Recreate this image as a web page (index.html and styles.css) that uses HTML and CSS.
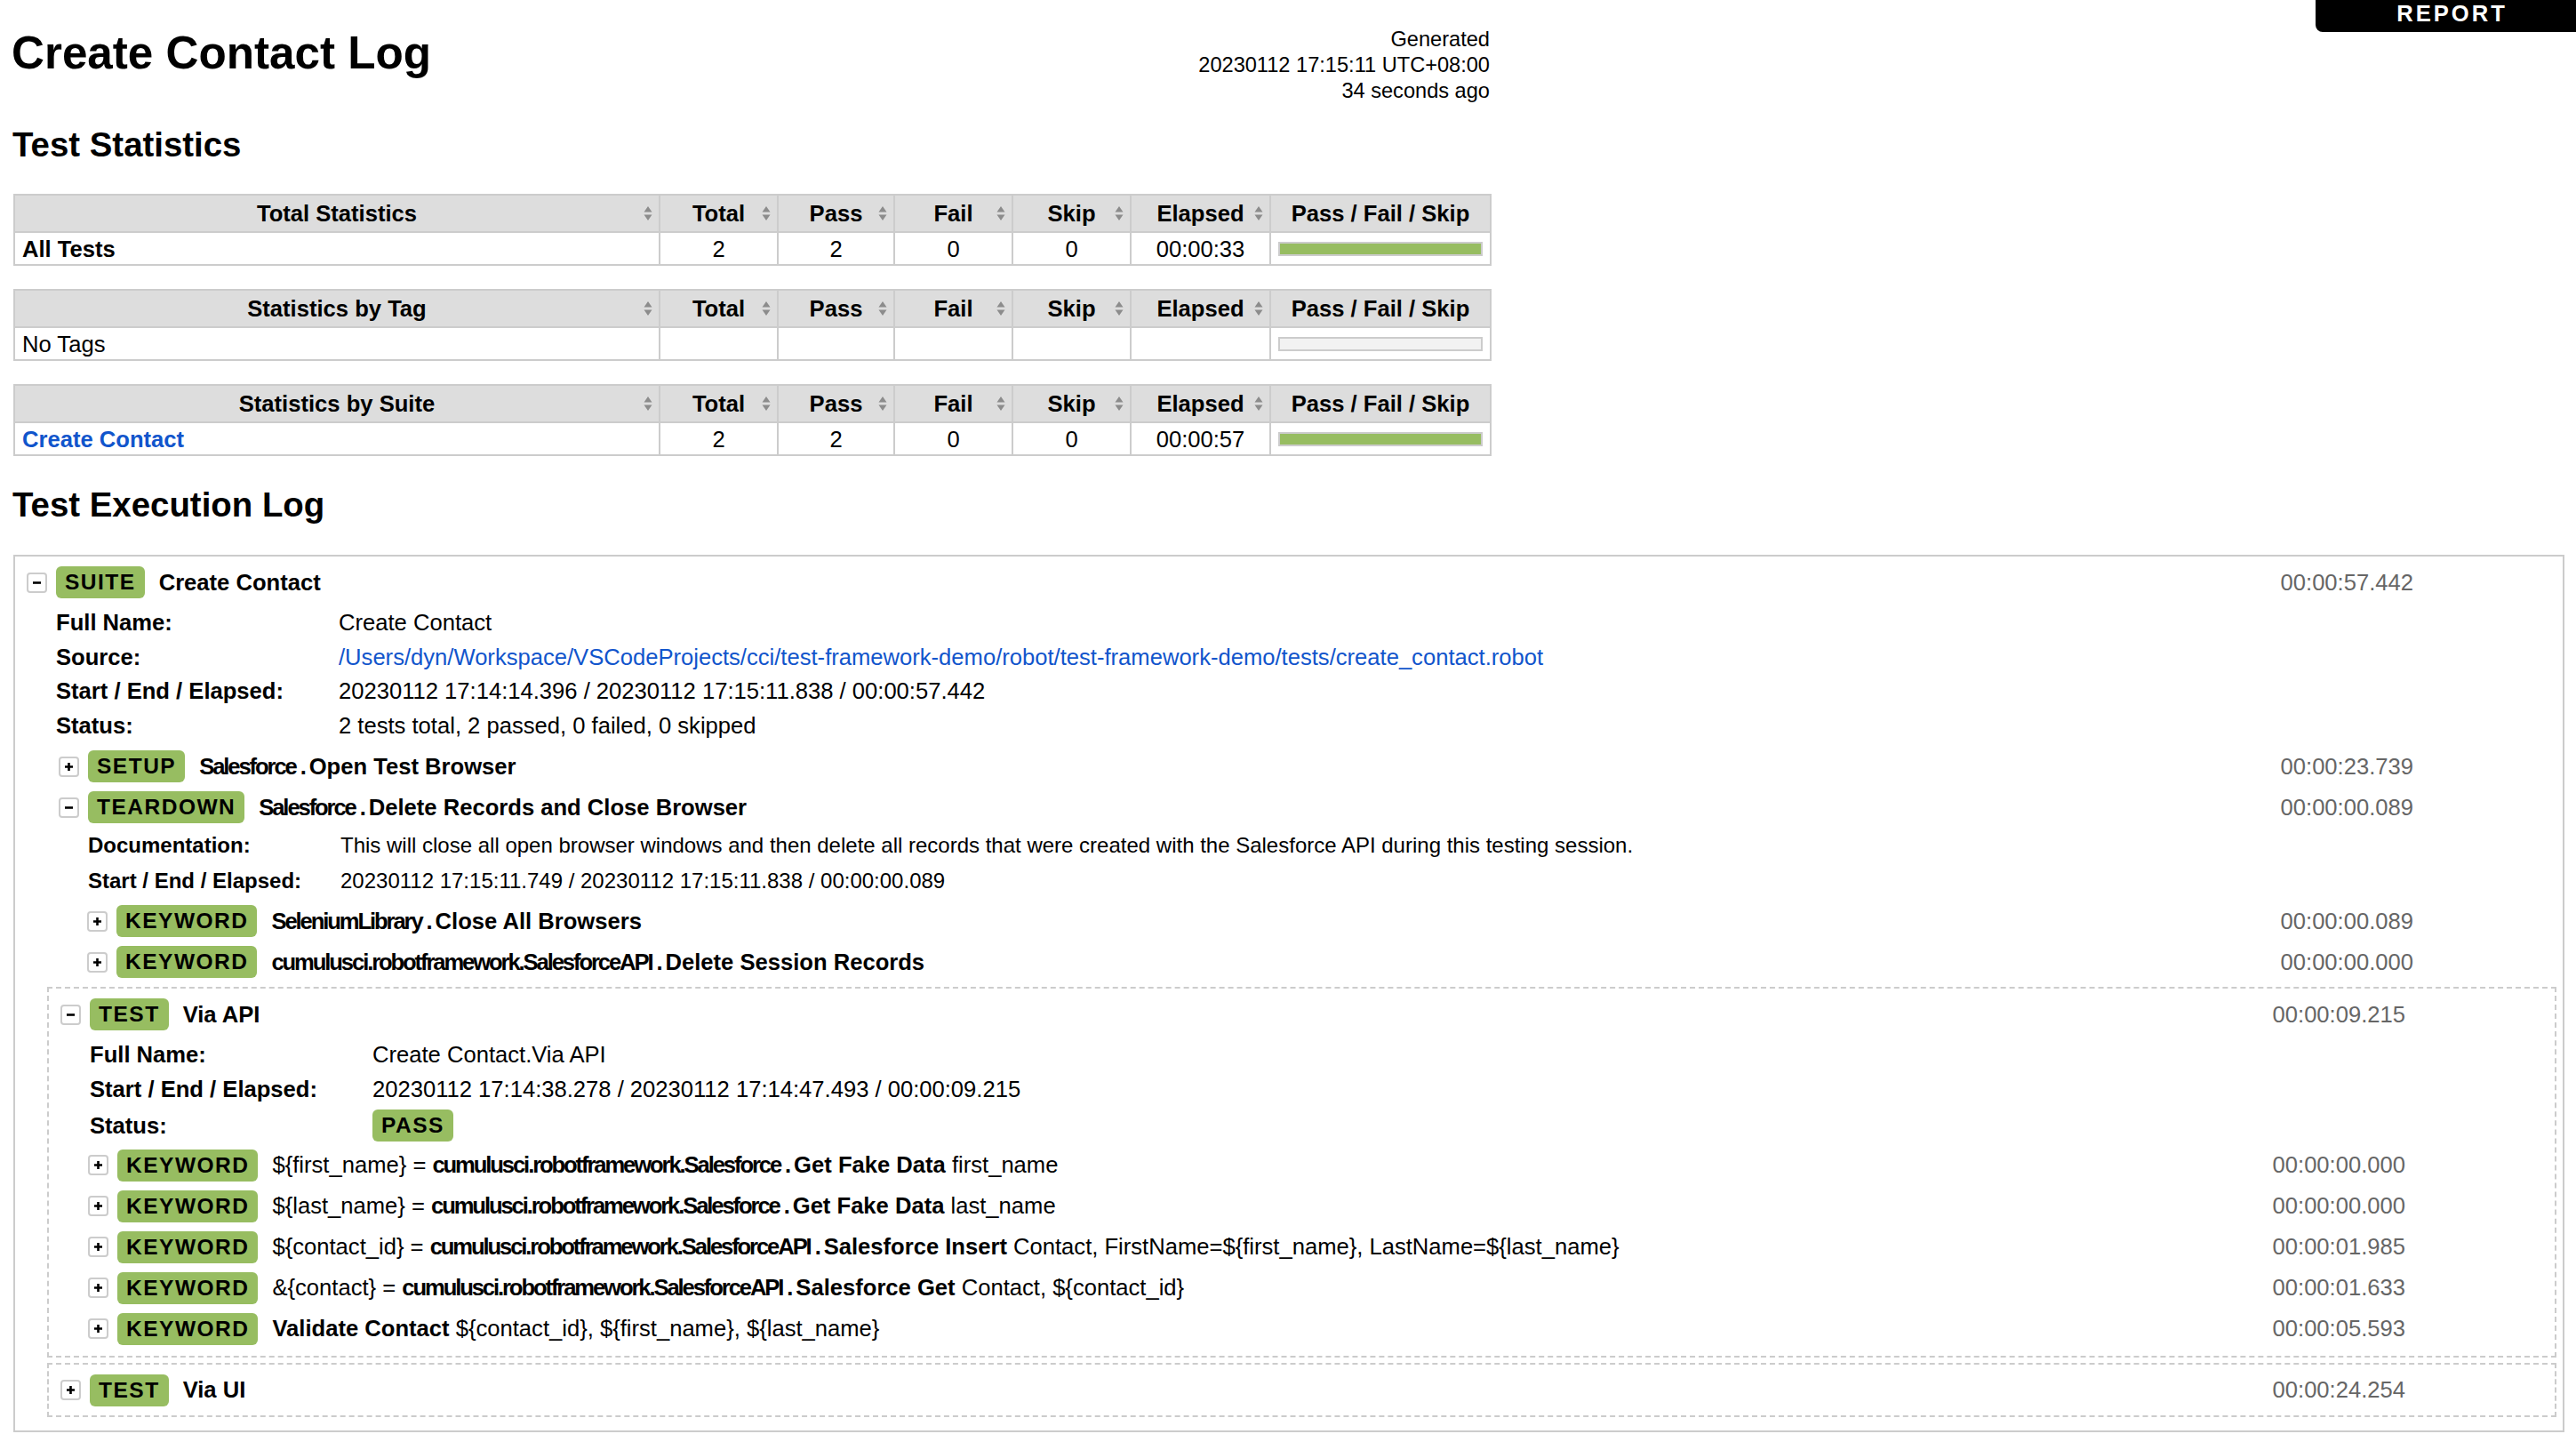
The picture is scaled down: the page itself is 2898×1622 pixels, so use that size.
FILE: index.html
```html
<!DOCTYPE html>
<html lang="en">
<head>
<meta charset="utf-8">
<title>Create Contact Log</title>
<link rel="stylesheet" href="styles.css">
</head>
<body>
<div class="report-tab"><a href="#">REPORT</a></div>

<div class="header">
  <h1 class="title">Create Contact Log</h1>
  <div class="generated">Generated<br>20230112 17:15:11 UTC+08:00<br>34 seconds ago</div>
</div>

<h2 class="section-title">Test Statistics</h2>

<table class="statistics">
  <colgroup><col class="c-name"><col class="c-num"><col class="c-num2"><col class="c-num"><col class="c-num"><col class="c-elapsed"><col class="c-graph"></colgroup>
  <tr>
    <th>Total Statistics<svg class="sort" width="10" height="18" viewBox="0 0 10 18"><path d="M5 1L9.5 7.5H0.5Z M5 17L9.5 10.5H0.5Z"/></svg></th>
    <th>Total<svg class="sort" width="10" height="18" viewBox="0 0 10 18"><path d="M5 1L9.5 7.5H0.5Z M5 17L9.5 10.5H0.5Z"/></svg></th>
    <th>Pass<svg class="sort" width="10" height="18" viewBox="0 0 10 18"><path d="M5 1L9.5 7.5H0.5Z M5 17L9.5 10.5H0.5Z"/></svg></th>
    <th>Fail<svg class="sort" width="10" height="18" viewBox="0 0 10 18"><path d="M5 1L9.5 7.5H0.5Z M5 17L9.5 10.5H0.5Z"/></svg></th>
    <th>Skip<svg class="sort" width="10" height="18" viewBox="0 0 10 18"><path d="M5 1L9.5 7.5H0.5Z M5 17L9.5 10.5H0.5Z"/></svg></th>
    <th>Elapsed<svg class="sort" width="10" height="18" viewBox="0 0 10 18"><path d="M5 1L9.5 7.5H0.5Z M5 17L9.5 10.5H0.5Z"/></svg></th>
    <th>Pass / Fail / Skip</th>
  </tr>
  <tr>
    <td class="stat-name bold">All Tests</td>
    <td>2</td><td>2</td><td>0</td><td>0</td><td>00:00:33</td>
    <td><div class="graph"><div class="pass-bar"></div></div></td>
  </tr>
</table>

<table class="statistics">
  <colgroup><col class="c-name"><col class="c-num"><col class="c-num2"><col class="c-num"><col class="c-num"><col class="c-elapsed"><col class="c-graph"></colgroup>
  <tr>
    <th>Statistics by Tag<svg class="sort" width="10" height="18" viewBox="0 0 10 18"><path d="M5 1L9.5 7.5H0.5Z M5 17L9.5 10.5H0.5Z"/></svg></th>
    <th>Total<svg class="sort" width="10" height="18" viewBox="0 0 10 18"><path d="M5 1L9.5 7.5H0.5Z M5 17L9.5 10.5H0.5Z"/></svg></th>
    <th>Pass<svg class="sort" width="10" height="18" viewBox="0 0 10 18"><path d="M5 1L9.5 7.5H0.5Z M5 17L9.5 10.5H0.5Z"/></svg></th>
    <th>Fail<svg class="sort" width="10" height="18" viewBox="0 0 10 18"><path d="M5 1L9.5 7.5H0.5Z M5 17L9.5 10.5H0.5Z"/></svg></th>
    <th>Skip<svg class="sort" width="10" height="18" viewBox="0 0 10 18"><path d="M5 1L9.5 7.5H0.5Z M5 17L9.5 10.5H0.5Z"/></svg></th>
    <th>Elapsed<svg class="sort" width="10" height="18" viewBox="0 0 10 18"><path d="M5 1L9.5 7.5H0.5Z M5 17L9.5 10.5H0.5Z"/></svg></th>
    <th>Pass / Fail / Skip</th>
  </tr>
  <tr>
    <td class="stat-name">No Tags</td>
    <td></td><td></td><td></td><td></td><td></td>
    <td><div class="graph"></div></td>
  </tr>
</table>

<table class="statistics">
  <colgroup><col class="c-name"><col class="c-num"><col class="c-num2"><col class="c-num"><col class="c-num"><col class="c-elapsed"><col class="c-graph"></colgroup>
  <tr>
    <th>Statistics by Suite<svg class="sort" width="10" height="18" viewBox="0 0 10 18"><path d="M5 1L9.5 7.5H0.5Z M5 17L9.5 10.5H0.5Z"/></svg></th>
    <th>Total<svg class="sort" width="10" height="18" viewBox="0 0 10 18"><path d="M5 1L9.5 7.5H0.5Z M5 17L9.5 10.5H0.5Z"/></svg></th>
    <th>Pass<svg class="sort" width="10" height="18" viewBox="0 0 10 18"><path d="M5 1L9.5 7.5H0.5Z M5 17L9.5 10.5H0.5Z"/></svg></th>
    <th>Fail<svg class="sort" width="10" height="18" viewBox="0 0 10 18"><path d="M5 1L9.5 7.5H0.5Z M5 17L9.5 10.5H0.5Z"/></svg></th>
    <th>Skip<svg class="sort" width="10" height="18" viewBox="0 0 10 18"><path d="M5 1L9.5 7.5H0.5Z M5 17L9.5 10.5H0.5Z"/></svg></th>
    <th>Elapsed<svg class="sort" width="10" height="18" viewBox="0 0 10 18"><path d="M5 1L9.5 7.5H0.5Z M5 17L9.5 10.5H0.5Z"/></svg></th>
    <th>Pass / Fail / Skip</th>
  </tr>
  <tr>
    <td class="stat-name bold"><a href="#">Create Contact</a></td>
    <td>2</td><td>2</td><td>0</td><td>0</td><td>00:00:57</td>
    <td><div class="graph"><div class="pass-bar"></div></div></td>
  </tr>
</table>

<h2 class="section-title log-title">Test Execution Log</h2>

<div class="suite-box">
  <div class="el-header">
    <span class="toggle"><svg width="11" height="11" viewBox="0 0 11 11"><path d="M1 5.5H10" stroke="#000" stroke-width="2.6"/></svg></span>
    <span class="label">SUITE</span>
    <span class="name">Create Contact</span>
    <span class="elapsed">00:00:57.442</span>
  </div>
  <table class="metadata">
    <tr><th>Full Name:</th><td>Create Contact</td></tr>
    <tr><th>Source:</th><td><a href="#">/Users/dyn/Workspace/VSCodeProjects/cci/test-framework-demo/robot/test-framework-demo/tests/create_contact.robot</a></td></tr>
    <tr><th>Start / End / Elapsed:</th><td>20230112 17:14:14.396 / 20230112 17:15:11.838 / 00:00:57.442</td></tr>
    <tr><th>Status:</th><td>2 tests total, 2 passed, 0 failed, 0 skipped</td></tr>
  </table>

  <div class="suite-children">
    <div class="kw">
      <div class="el-header">
        <span class="toggle"><svg width="11" height="11" viewBox="0 0 11 11"><path d="M5.5 1V10M1 5.5H10" stroke="#000" stroke-width="2.6"/></svg></span>
        <span class="label">SETUP</span>
        <span class="name"><span class="parent">Salesforce . </span>Open Test Browser</span>
        <span class="elapsed">00:00:23.739</span>
      </div>
    </div>

    <div class="kw">
      <div class="el-header">
        <span class="toggle"><svg width="11" height="11" viewBox="0 0 11 11"><path d="M1 5.5H10" stroke="#000" stroke-width="2.6"/></svg></span>
        <span class="label">TEARDOWN</span>
        <span class="name"><span class="parent">Salesforce . </span>Delete Records and Close Browser</span>
        <span class="elapsed">00:00:00.089</span>
      </div>
      <table class="metadata small">
        <tr><th>Documentation:</th><td>This will close all open browser windows and then delete all records that were created with the Salesforce API during this testing session.</td></tr>
        <tr><th>Start / End / Elapsed:</th><td>20230112 17:15:11.749 / 20230112 17:15:11.838 / 00:00:00.089</td></tr>
      </table>
      <div class="kw-children">
        <div class="kw">
          <div class="el-header">
            <span class="toggle"><svg width="11" height="11" viewBox="0 0 11 11"><path d="M5.5 1V10M1 5.5H10" stroke="#000" stroke-width="2.6"/></svg></span>
            <span class="label">KEYWORD</span>
            <span class="name"><span class="parent">SeleniumLibrary . </span>Close All Browsers</span>
            <span class="elapsed">00:00:00.089</span>
          </div>
        </div>
        <div class="kw">
          <div class="el-header">
            <span class="toggle"><svg width="11" height="11" viewBox="0 0 11 11"><path d="M5.5 1V10M1 5.5H10" stroke="#000" stroke-width="2.6"/></svg></span>
            <span class="label">KEYWORD</span>
            <span class="name"><span class="parent">cumulusci.robotframework.SalesforceAPI . </span>Delete Session Records</span>
            <span class="elapsed">00:00:00.000</span>
          </div>
        </div>
      </div>
    </div>

    <div class="test">
      <div class="el-header">
        <span class="toggle"><svg width="11" height="11" viewBox="0 0 11 11"><path d="M1 5.5H10" stroke="#000" stroke-width="2.6"/></svg></span>
        <span class="label">TEST</span>
        <span class="name">Via API</span>
        <span class="elapsed">00:00:09.215</span>
      </div>
      <table class="metadata test-meta">
        <tr><th>Full Name:</th><td>Create Contact.Via API</td></tr>
        <tr><th>Start / End / Elapsed:</th><td>20230112 17:14:38.278 / 20230112 17:14:47.493 / 00:00:09.215</td></tr>
        <tr><th>Status:</th><td><span class="label">PASS</span></td></tr>
      </table>
      <div class="test-children">
        <div class="kw">
          <div class="el-header">
            <span class="toggle"><svg width="11" height="11" viewBox="0 0 11 11"><path d="M5.5 1V10M1 5.5H10" stroke="#000" stroke-width="2.6"/></svg></span>
            <span class="label">KEYWORD</span>
            <span class="plain">${first_name} = </span><span class="name"><span class="parent">cumulusci.robotframework.Salesforce . </span>Get Fake Data</span><span class="plain">&nbsp;first_name</span>
            <span class="elapsed">00:00:00.000</span>
          </div>
        </div>
        <div class="kw">
          <div class="el-header">
            <span class="toggle"><svg width="11" height="11" viewBox="0 0 11 11"><path d="M5.5 1V10M1 5.5H10" stroke="#000" stroke-width="2.6"/></svg></span>
            <span class="label">KEYWORD</span>
            <span class="plain">${last_name} = </span><span class="name"><span class="parent">cumulusci.robotframework.Salesforce . </span>Get Fake Data</span><span class="plain">&nbsp;last_name</span>
            <span class="elapsed">00:00:00.000</span>
          </div>
        </div>
        <div class="kw">
          <div class="el-header">
            <span class="toggle"><svg width="11" height="11" viewBox="0 0 11 11"><path d="M5.5 1V10M1 5.5H10" stroke="#000" stroke-width="2.6"/></svg></span>
            <span class="label">KEYWORD</span>
            <span class="plain">${contact_id} = </span><span class="name"><span class="parent">cumulusci.robotframework.SalesforceAPI . </span>Salesforce Insert</span><span class="plain">&nbsp;Contact, FirstName=${first_name}, LastName=${last_name}</span>
            <span class="elapsed">00:00:01.985</span>
          </div>
        </div>
        <div class="kw">
          <div class="el-header">
            <span class="toggle"><svg width="11" height="11" viewBox="0 0 11 11"><path d="M5.5 1V10M1 5.5H10" stroke="#000" stroke-width="2.6"/></svg></span>
            <span class="label">KEYWORD</span>
            <span class="plain">&amp;{contact} = </span><span class="name"><span class="parent">cumulusci.robotframework.SalesforceAPI . </span>Salesforce Get</span><span class="plain">&nbsp;Contact, ${contact_id}</span>
            <span class="elapsed">00:00:01.633</span>
          </div>
        </div>
        <div class="kw">
          <div class="el-header">
            <span class="toggle"><svg width="11" height="11" viewBox="0 0 11 11"><path d="M5.5 1V10M1 5.5H10" stroke="#000" stroke-width="2.6"/></svg></span>
            <span class="label">KEYWORD</span>
            <span class="name">Validate Contact</span><span class="plain">&nbsp;${contact_id}, ${first_name}, ${last_name}</span>
            <span class="elapsed">00:00:05.593</span>
          </div>
        </div>
      </div>
    </div>

    <div class="test test-next">
      <div class="el-header">
        <span class="toggle"><svg width="11" height="11" viewBox="0 0 11 11"><path d="M5.5 1V10M1 5.5H10" stroke="#000" stroke-width="2.6"/></svg></span>
        <span class="label">TEST</span>
        <span class="name">Via UI</span>
        <span class="elapsed">00:00:24.254</span>
      </div>
    </div>
  </div>
</div>
</body>
</html>
```

FILE: styles.css
```css
* { box-sizing: border-box; }
html, body { margin: 0; background: #fff; }
body {
  padding: 0 13px 0 15px;
  font-family: "Liberation Sans", Arial, Helvetica, sans-serif;
  font-size: 25.6px;
  color: #000;
  min-height: 1622px;
}
a { color: #15c; text-decoration: none; }

.report-tab { position: absolute; top: 0; right: 0; width: 293px; }
.report-tab a {
  display: block;
  background: #000;
  color: #fff;
  font-weight: bold;
  letter-spacing: 3px;
  text-align: center;
  height: 36px;
  line-height: 31px;
  padding-left: 14px;
  border-bottom-left-radius: 8px;
}

.header {
  width: 1661px;
  display: flex;
  justify-content: space-between;
  align-items: flex-start;
  padding-top: 30px;
}
.title { margin: 0 0 0 -2px; font-size: 51.2px; line-height: 59px; font-weight: bold; }
.generated { font-size: 23.6px; line-height: 29px; text-align: right; white-space: nowrap; }

.section-title { font-size: 38.4px; line-height: 44px; margin: 24px 0 33px -1px; font-weight: bold; }
.log-title { margin-top: 33px; margin-bottom: 34px; }

.statistics {
  width: 1661px;
  border-collapse: collapse;
  table-layout: fixed;
  margin-bottom: 26px;
}
.c-name { width: 726px; }
.c-num { width: 133px; }
.c-num2 { width: 131px; }
.c-elapsed { width: 157px; }
.c-graph { width: 248px; }
.statistics th, .statistics td { border: 2px solid #ccc; }
.statistics th {
  background: #ddd;
  font-weight: bold;
  line-height: 30px;
  padding: 5px 8px;
  text-align: center;
  position: relative;
  white-space: nowrap;
}
.statistics td { line-height: 30px; padding: 2.5px 8px; text-align: center; white-space: nowrap; }
.statistics td.stat-name { text-align: left; }
.bold { font-weight: bold; }
.sort { position: absolute; right: 7px; top: 50%; margin-top: -9px; fill: #8c8c8c; }
.graph { height: 16px; border: 2px solid #ccc; background: #f2f2f2; }
.pass-bar { height: 100%; background: #97bd61; }

.suite-box { border: 2px solid #ccc; padding: 6px 0 15px; }
.el-header {
  display: flex;
  align-items: center;
  height: 46px;
  padding: 0 168px 0 13px;
  white-space: nowrap;
}
.toggle {
  width: 23px;
  height: 23px;
  border: 2px solid #ccc;
  border-radius: 4px;
  background: #fff;
  display: flex;
  align-items: center;
  justify-content: center;
  margin-right: 10px;
  flex: none;
}
.label {
  display: inline-block;
  height: 36px;
  line-height: 36px;
  padding: 0 10px;
  font-size: 24.5px;
  font-weight: bold;
  letter-spacing: 1.5px;
  background: #97bd61;
  border-radius: 6px;
  color: #000;
}
.el-header .label { margin-right: 16px; }
.name { font-weight: bold; }
.parent { letter-spacing: -0.082em; }
.plain { white-space: pre; }
.elapsed { margin-left: auto; color: #666; }

.metadata { border-collapse: collapse; margin: 3px 0 4px 46px; }
.metadata th {
  text-align: left;
  font-weight: bold;
  width: 318px;
  padding: 4px 0 4.5px;
  line-height: 30px;
  vertical-align: middle;
  white-space: nowrap;
}
.metadata td { padding: 4px 0 4.5px; line-height: 30px; vertical-align: middle; white-space: nowrap; }
.metadata.small { font-size: 24px; margin: 0 0 2px 46px; }
.metadata.small th { width: 284px; padding: 5px 0; }
.metadata.small td { padding: 5px 0; }
.metadata.test-meta { margin: 3px 0 -1px 46px; }

.suite-children { margin-left: 36px; }
.kw-children { margin-left: 32px; }
.test-children { margin-left: 31px; }

.test {
  border: 2px dashed #ccc;
  margin: 5px 7px 0 0;
  padding: 6px 0 7px;
}
.test-next { margin-top: 6px; padding-bottom: 5px; }
```
